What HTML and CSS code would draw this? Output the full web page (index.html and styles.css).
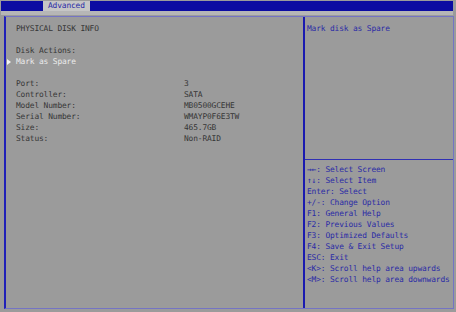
FILE: index.html
```html
<!DOCTYPE html>
<html lang="en">
<head>
  <meta charset="UTF-8">
  <title>Advanced - Physical Disk Info</title>
  <link rel="stylesheet" href="styles.css">
</head>
<body>
  <div class="topbar">
    <div class="tab">Advanced</div>
  </div>
  <div class="strip"></div>

  <div class="frame">
    <!-- left pane: setup items -->
    <div class="main">
      <div class="line">PHYSICAL DISK INFO</div>
      <div class="line"></div>
      <div class="line">Disk Actions:</div>
      <div class="line selected">Mark as Spare</div>
      <div class="line"></div>
      <div class="row"><span>Port:</span><span>3</span></div>
      <div class="row"><span>Controller:</span><span>SATA</span></div>
      <div class="row"><span>Model Number:</span><span>MB0500GCEHE</span></div>
      <div class="row"><span>Serial Number:</span><span>WMAYP0F6E3TW</span></div>
      <div class="row"><span>Size:</span><span>465.7GB</span></div>
      <div class="row"><span>Status:</span><span>Non-RAID</span></div>
    </div>

    <!-- right pane: help -->
    <div class="side">
      <div class="help">
        <div class="line">Mark disk as Spare</div>
      </div>
      <div class="keys">
        <div class="line">&rarr;&larr;: Select Screen</div>
        <div class="line">&uarr;&darr;: Select Item</div>
        <div class="line">Enter: Select</div>
        <div class="line">+/-: Change Option</div>
        <div class="line">F1: General Help</div>
        <div class="line">F2: Previous Values</div>
        <div class="line">F3: Optimized Defaults</div>
        <div class="line">F4: Save &amp; Exit Setup</div>
        <div class="line">ESC: Exit</div>
        <div class="line">&lt;K&gt;: Scroll help area upwards</div>
        <div class="line">&lt;M&gt;: Scroll help area downwards</div>
      </div>
    </div>
  </div>
</body>
</html>
```

FILE: styles.css
```css
body {
  margin: 0; width: 456px; height: 312px; overflow: hidden;
  background: #9b9b9b; color: #363636;
  font-family: "DejaVu Sans Mono", "Liberation Mono", monospace; font-size: 7.9px;
  letter-spacing: -0.15px;
}

.topbar { display: flex; height: 10px; margin: 1px 3px 0 1px; padding-left: 42px; background: #0c0ca2; }
.tab { padding: 0 5px; line-height: 10px; background: #c6c6c6; color: #2a2aa6; }
.strip { height: 4px; margin: 0 3px 0 1px; background: #b6b6b6; }

.frame {
  display: grid; grid-template-columns: 299px 1fr;
  height: 291px; margin: 1px 2px 0 4px;
  border: 1px solid #7474c4; border-left: 2px solid #2020b8;
}

.line { height: 11px; line-height: 11px; white-space: pre; }
.row { display: grid; grid-template-columns: 168px 1fr; height: 11px; line-height: 11px; }

.main { padding: 6px 0 0 10px; border-right: 2px solid #1a1ab0; }
.selected { position: relative; color: #ececec; }
.selected::before {
  content: ""; position: absolute; left: -9px; top: 3px;
  border-left: 4px solid #f4f4f4; border-top: 3px solid transparent; border-bottom: 3px solid transparent;
}

.side { display: flex; flex-direction: column; color: #2a2aa6; }
.help { height: 136px; padding: 6px 0 0 2px; border-bottom: 1px solid #3030b4; }
.keys { padding: 4px 0 0 2px; }
```
